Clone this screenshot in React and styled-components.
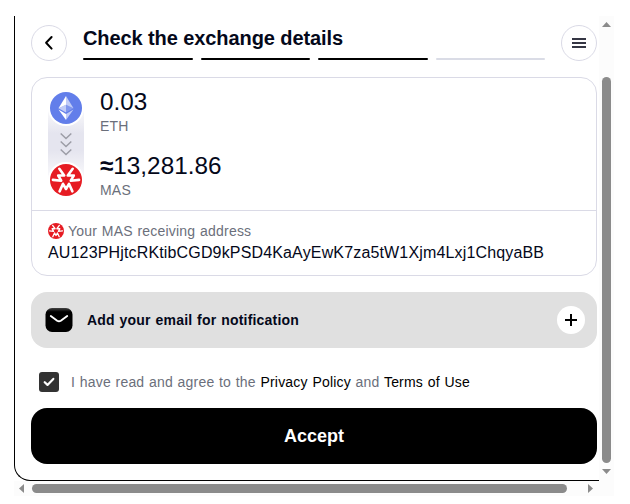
import React from "react";
import styled, { createGlobalStyle } from "styled-components";

const STEPS = [true, true, true, false];

const MassaLogo = ({ size }) => (
    <svg width={size} height={size} viewBox="-16 -16 32 32">
        <circle r="16" fill="#e61c23" />
        {[0, 120, 240].map((angle) => (
            <path
                key={angle}
                transform={`rotate(${angle})`}
                d="M-6.4 11.4-3 3.8 0 9l3-5.2 3.4 7.6"
                fill="none"
                stroke="#fff"
                strokeWidth="2.6"
                strokeLinecap="round"
                strokeLinejoin="round"
            />
        ))}
    </svg>
);

const EthLogo = () => (
    <svg width="32" height="32" viewBox="0 0 32 32">
        <circle cx="16" cy="16" r="16" fill="#627eea" />
        <g fill="#fff" transform="translate(-.5)">
            <path fillOpacity=".6" d="M16.5 4v8.87l7.5 3.35z" />
            <path d="M16.5 4 9 16.22l7.5-3.35z" />
            <path fillOpacity=".6" d="M16.5 21.97v6.03L24 17.62z" />
            <path d="M16.5 28v-6.03L9 17.62z" />
            <path fillOpacity=".2" d="m16.5 20.57 7.5-4.35-7.5-3.35z" />
            <path fillOpacity=".6" d="m9 16.22 7.5 4.35v-7.7z" />
        </g>
    </svg>
);

const ExchangePage = () => {
    return (
        <>
            <GlobalStyle />
            <Viewport>
                <Panel>
                    <Header>
                        <RoundButton aria-label="Back">
                            <svg width="34" height="34" viewBox="0 0 34 34">
                                <path
                                    d="m19.6 11-5.5 5.8 5.5 5.8"
                                    fill="none"
                                    stroke="#000"
                                    strokeWidth="2"
                                    strokeLinecap="round"
                                    strokeLinejoin="round"
                                />
                            </svg>
                        </RoundButton>
                        <Heading>
                            <Title>Check the exchange details</Title>
                            <Steps>
                                {STEPS.map((done, i) => (
                                    <Step key={i} $done={done} />
                                ))}
                            </Steps>
                        </Heading>
                        <RoundButton aria-label="Menu">
                            <svg width="34" height="34" viewBox="0 0 34 34">
                                <path
                                    d="M10 13h14M10 17h14M10 21h14"
                                    stroke="#353644"
                                    strokeWidth="2.2"
                                />
                            </svg>
                        </RoundButton>
                    </Header>

                    <Card>
                        <Exchange>
                            <Track>
                                <Coin>
                                    <EthLogo />
                                </Coin>
                                <svg width="12" height="24" viewBox="0 0 12 24">
                                    <path
                                        d="m.7 1.5 5.3 5 5.3-5M.7 9.5l5.3 5 5.3-5M.7 17.5l5.3 5 5.3-5"
                                        fill="none"
                                        stroke="#9c9da6"
                                        strokeWidth="1.5"
                                    />
                                </svg>
                                <Coin>
                                    <MassaLogo size={32} />
                                </Coin>
                            </Track>
                            <Amounts>
                                <div>
                                    <Amount>0.03</Amount>
                                    <Ticker>ETH</Ticker>
                                </div>
                                <div>
                                    <Amount>
                                        <b>≈</b>13,281.86
                                    </Amount>
                                    <Ticker>MAS</Ticker>
                                </div>
                            </Amounts>
                        </Exchange>
                        <Receiver>
                            <ReceiverLabel>
                                <MassaLogo size={16} />
                                Your MAS receiving address
                            </ReceiverLabel>
                            <Address>
                                AU123PHjtcRKtibCGD9kPSD4KaAyEwK7za5tW1Xjm4Lxj1ChqyaBB
                            </Address>
                        </Receiver>
                    </Card>

                    <EmailRow>
                        <MailIcon width="28" height="26" viewBox="0 0 28 26">
                            <defs>
                                <linearGradient id="mail" x1="0" y1="0" x2="0" y2="1">
                                    <stop offset="0" stopColor="#444" />
                                    <stop offset=".16" stopColor="#000" />
                                </linearGradient>
                            </defs>
                            <rect x=".5" y="1" width="27" height="24" rx="6.5" fill="url(#mail)" />
                            <path
                                d="m5.8 9 6.4 4.7q1.8 1.2 3.6 0L22.2 9"
                                fill="none"
                                stroke="#fff"
                                strokeWidth="1.9"
                                strokeLinecap="round"
                            />
                        </MailIcon>
                        <EmailText>Add your email for notification</EmailText>
                        <AddButton aria-label="Add email">
                            <svg width="12" height="12" viewBox="0 0 12 12">
                                <path d="M0 6h12M6 0v12" stroke="#000" strokeWidth="2" />
                            </svg>
                        </AddButton>
                    </EmailRow>

                    <Agreement>
                        <Checkbox>
                            <svg width="12" height="10" viewBox="0 0 12 10">
                                <path
                                    d="m1.7 5.2 2.8 2.7 5.8-6"
                                    fill="none"
                                    stroke="#fff"
                                    strokeWidth="2.2"
                                    strokeLinecap="round"
                                    strokeLinejoin="round"
                                />
                            </svg>
                        </Checkbox>
                        <AgreementText>
                            I have read and agree to the <a>Privacy Policy</a> and{" "}
                            <a>Terms of Use</a>
                        </AgreementText>
                    </Agreement>

                    <AcceptButton>Accept</AcceptButton>
                </Panel>

                <VerticalBar>
                    <svg width="9" height="5" viewBox="0 0 9 5">
                        <path d="M0 5 4.5 0 9 5z" fill="#8b8b8b" />
                    </svg>
                    <VerticalThumb />
                    <svg width="9" height="5" viewBox="0 0 9 5">
                        <path d="M0 0h9L4.5 5z" fill="#8b8b8b" />
                    </svg>
                </VerticalBar>
                <HorizontalBar>
                    <svg width="5" height="9" viewBox="0 0 5 9">
                        <path d="M5 0v9L0 4.5z" fill="#8b8b8b" />
                    </svg>
                    <HorizontalThumb />
                    <svg width="5" height="9" viewBox="0 0 5 9">
                        <path d="M0 0v9l5-4.5z" fill="#8b8b8b" />
                    </svg>
                </HorizontalBar>
                <Corner />
            </Viewport>
        </>
    );
};

const GlobalStyle = createGlobalStyle`
    * {
        box-sizing: border-box;
    }

    body {
        margin: 0;
        background: #fff;
        color: #04081a;
        font-family: "Liberation Sans", Arial, sans-serif;
        overflow: hidden;
    }

    button {
        padding: 0;
        border: 0;
        font-family: inherit;
    }

    svg {
        display: block;
        flex-shrink: 0;
    }
`;

const Viewport = styled.div`
    display: grid;
    grid-template-columns: 585px 15px;
    grid-template-rows: 465px 15px;
    width: 600px;
    margin: 16px 0 0 14px;
`;

const Panel = styled.main`
    height: 465px;
    padding: 9px 2px 0 16px;
    border: solid #000;
    border-width: 0 0 1px 1px;
    border-bottom-left-radius: 16px;
`;

const Header = styled.header`
    display: flex;
    gap: 16px;
    height: 36px;
    margin-bottom: 16px;
`;

const RoundButton = styled.button`
    flex: 0 0 36px;
    height: 36px;
    border: 1px solid #dadae6;
    border-radius: 50%;
    background: #fff;
`;

const Heading = styled.div`
    flex: 1;
    display: flex;
    flex-direction: column;
    justify-content: space-between;
    padding: 1px 0;
`;

const Title = styled.h1`
    margin: 0;
    font-size: 20px;
    line-height: 24px;
    font-weight: 700;
    letter-spacing: -0.09px;
`;

const Steps = styled.div`
    display: flex;
    gap: 8px;
`;

const Step = styled.div`
    flex: 1;
    height: 2px;
    border-radius: 1px;
    background: ${(props) => (props.$done ? "#000" : "#dadce6")};
`;

const Card = styled.section`
    height: 199px;
    border: 1px solid #dadae6;
    border-radius: 16px;
`;

const Exchange = styled.div`
    display: flex;
    gap: 16px;
    height: 133px;
    padding: 12px 16px;
    border-bottom: 1px solid #dadae6;
`;

const Track = styled.div`
    display: flex;
    flex-direction: column;
    align-items: center;
    justify-content: space-between;
    width: 36px;
    height: 108px;
    border-radius: 18px;
    background: linear-gradient(#fff 12%, #e5e5ef 40%, #e5e5ef 56%, #fff 88%);
`;

const Coin = styled.div`
    padding: 2px;
    border-radius: 50%;
    background: #fff;
`;

const Amounts = styled.div`
    display: flex;
    flex-direction: column;
    gap: 16px;
    margin-top: -2px;
`;

const Amount = styled.div`
    margin-bottom: 1px;
    font-size: 24.3px;
    line-height: 27px;
`;

const Ticker = styled.div`
    font-size: 14px;
    line-height: 20px;
    letter-spacing: 0.2px;
    color: #6b6f7b;
`;

const Receiver = styled.div`
    padding: 10px 16px;
`;

const ReceiverLabel = styled.div`
    display: flex;
    align-items: center;
    gap: 4px;
    font-size: 14px;
    line-height: 20px;
    letter-spacing: 0.2px;
    word-spacing: 0.65px;
    color: #6b6f7b;
`;

const Address = styled.div`
    margin-top: 1px;
    font-size: 16px;
    line-height: 22px;
    letter-spacing: 0.155px;
`;

const EmailRow = styled.div`
    display: flex;
    align-items: center;
    height: 56px;
    margin: 16px 0 24px;
    padding: 0 12px 0 14px;
    border-radius: 16px;
    background: #e0e0e0;
`;

const MailIcon = styled.svg`
    margin-right: 14px;
`;

const EmailText = styled.span`
    flex: 1;
    font-size: 14px;
    font-weight: 700;
    letter-spacing: 0.2px;
    word-spacing: 0.7px;
`;

const AddButton = styled.button`
    display: grid;
    place-items: center;
    width: 28px;
    height: 28px;
    border-radius: 50%;
    background: #fff;
`;

const Agreement = styled.div`
    display: flex;
    align-items: center;
    gap: 12px;
    height: 20px;
    margin-bottom: 16px;
    padding-left: 8px;
`;

const Checkbox = styled.span`
    display: grid;
    place-items: center;
    width: 20px;
    height: 20px;
    border-radius: 3px;
    background: #333;
`;

const AgreementText = styled.span`
    font-size: 14px;
    line-height: 20px;
    letter-spacing: 0.2px;
    word-spacing: 0.55px;
    color: #6b6f7b;

    a {
        color: #000;
    }
`;

const AcceptButton = styled.button`
    display: block;
    width: 100%;
    height: 56px;
    border-radius: 16px;
    background: #000;
    color: #fff;
    font-size: 18px;
    font-weight: 700;
`;

const VerticalBar = styled.div`
    display: flex;
    flex-direction: column;
    align-items: center;
    justify-content: space-between;
    padding: 6px 0 7px;
    background: #fcfcfc;
`;

const VerticalThumb = styled.div`
    width: 9px;
    height: 386px;
    margin-top: 43px;
    border-radius: 5px;
    background: #8b8b8b;
`;

const HorizontalBar = styled.div`
    display: flex;
    align-items: center;
    justify-content: space-between;
    padding: 0 6px 0 5px;
    background: #fcfcfc;
`;

const HorizontalThumb = styled.div`
    width: 535px;
    height: 9px;
    margin-right: 13px;
    border-radius: 5px;
    background: #8b8b8b;
`;

const Corner = styled.div`
    background: #fcfcfc;
`;

export default ExchangePage;
